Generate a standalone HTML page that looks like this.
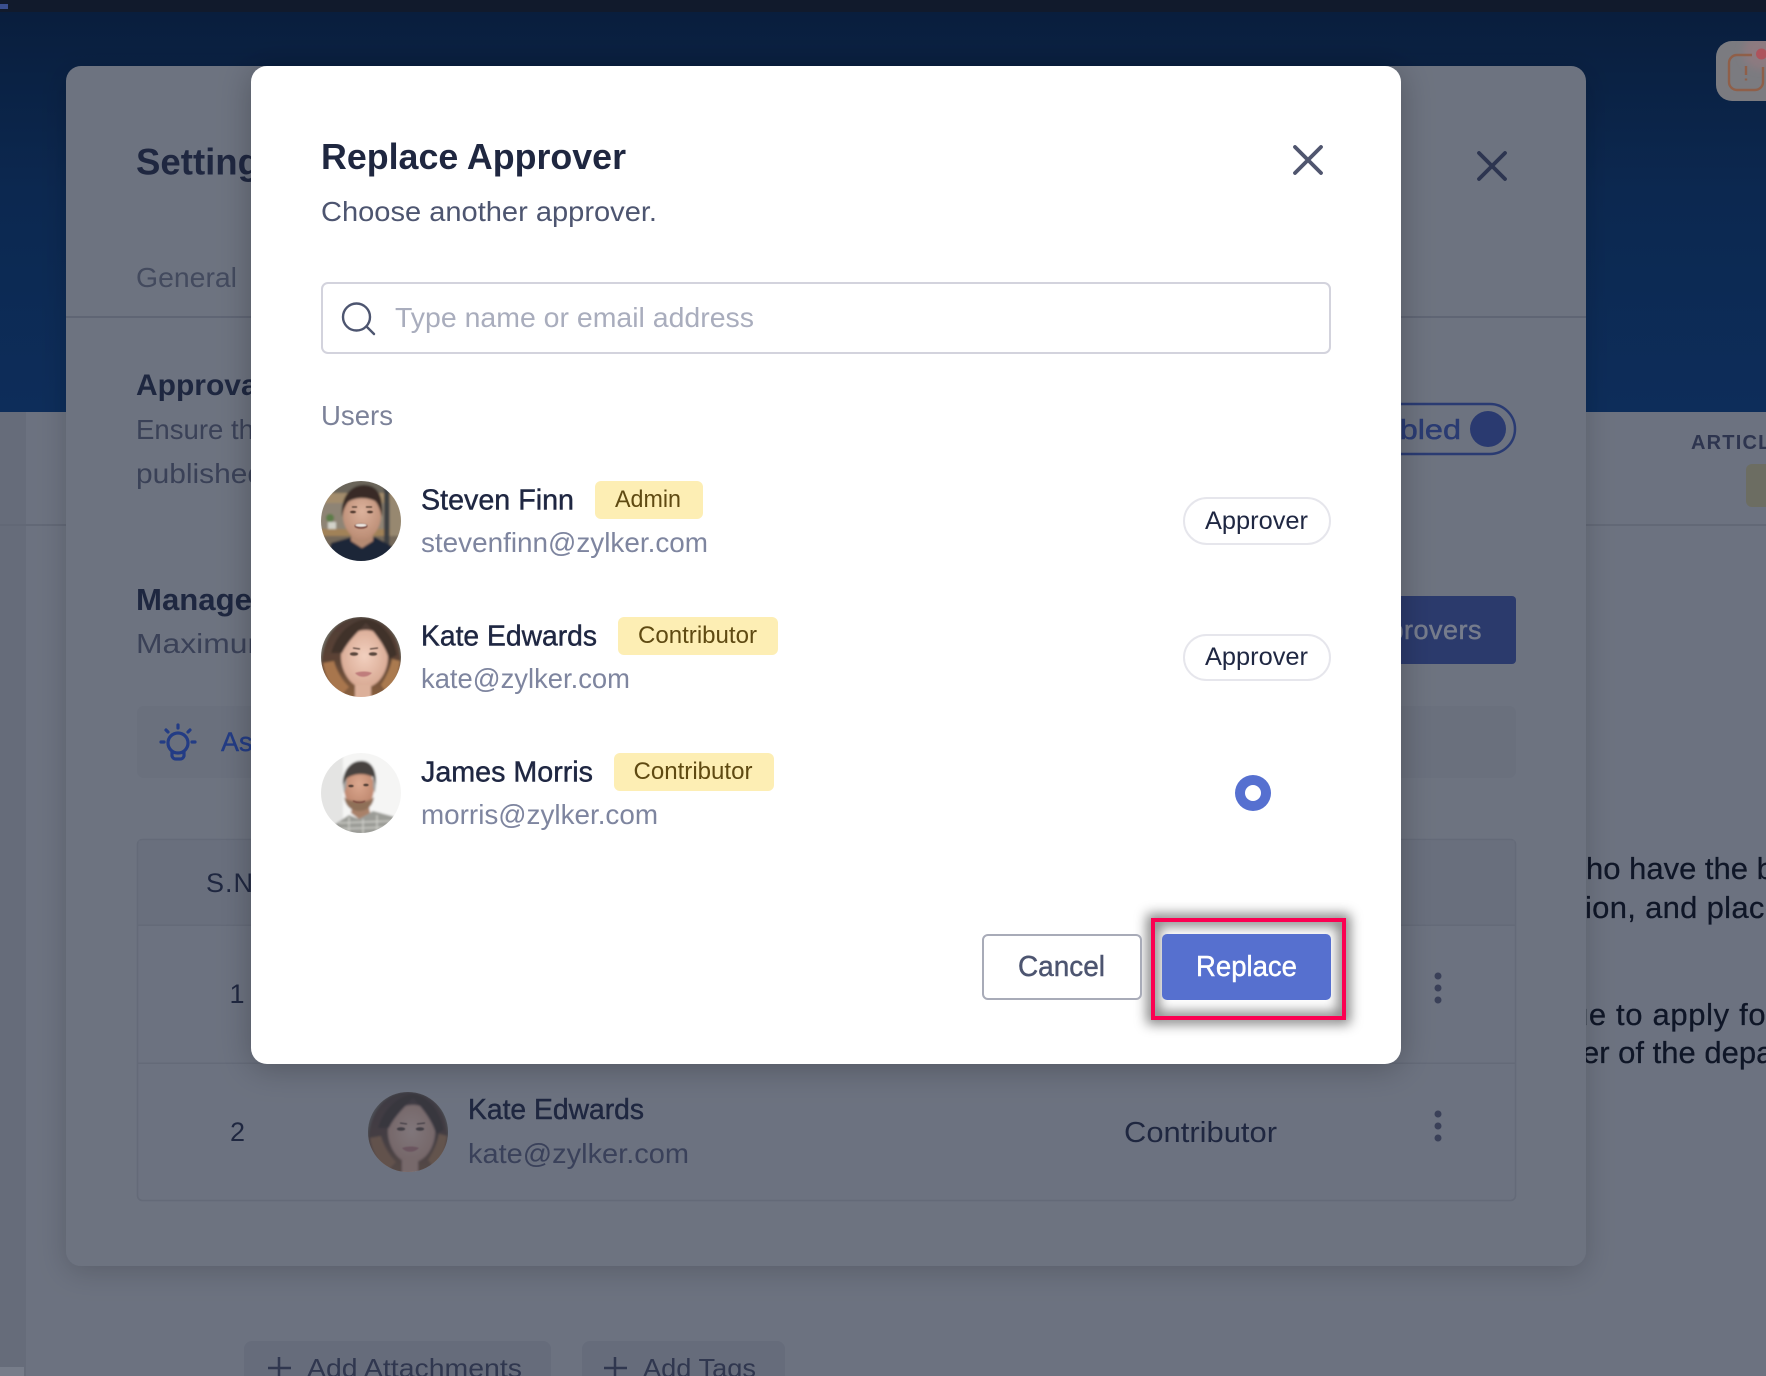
<!DOCTYPE html>
<html lang="en">
<head>
<meta charset="utf-8">
<title>Replace Approver</title>
<style>
html,body{margin:0;padding:0;width:1766px;height:1376px;overflow:hidden;background:#6c7280}
svg{display:block;position:absolute;left:0;top:0}
text{font-family:"Liberation Sans",Arial,sans-serif}
.m{stroke-width:.45px}
</style>
</head>
<body>
<svg width="1766" height="1376" viewBox="0 0 1766 1376" xmlns="http://www.w3.org/2000/svg">
<defs>
<linearGradient id="hdr" x1="0" y1="0" x2="0" y2="1"><stop offset="0" stop-color="#091e3d"/><stop offset=".45" stop-color="#0c2850"/><stop offset="1" stop-color="#0d2d5a"/></linearGradient>
<radialGradient id="skinS" cx=".5" cy=".4" r=".65"><stop offset="0" stop-color="#dcb29c"/><stop offset="1" stop-color="#b98a72"/></radialGradient>
<radialGradient id="skinK" cx=".5" cy=".45" r=".65"><stop offset="0" stop-color="#f2d0bf"/><stop offset="1" stop-color="#d3a18a"/></radialGradient>
<radialGradient id="skinJ" cx=".5" cy=".4" r=".65"><stop offset="0" stop-color="#dca88f"/><stop offset="1" stop-color="#b98269"/></radialGradient>
<linearGradient id="hairK" x1="0" y1="0" x2="0" y2="1"><stop offset="0" stop-color="#4d3c34"/><stop offset=".55" stop-color="#5d4436"/><stop offset="1" stop-color="#8d623f"/></linearGradient>
<filter id="av" x="-10%" y="-10%" width="120%" height="120%"><feGaussianBlur stdDeviation="1.100"/></filter>
<filter id="av2" x="-30%" y="-30%" width="160%" height="160%"><feGaussianBlur stdDeviation=".6"/></filter>
<filter id="sh1" x="-10%" y="-10%" width="120%" height="120%"><feDropShadow dx="0" dy="6" stdDeviation="14" flood-color="#000" flood-opacity=".17"/></filter>
<filter id="sh2" x="-10%" y="-10%" width="120%" height="120%"><feDropShadow dx="0" dy="4" stdDeviation="16" flood-color="#000" flood-opacity=".25"/></filter>
<filter id="glow" x="-30%" y="-50%" width="160%" height="200%"><feGaussianBlur stdDeviation="6"/></filter>
<filter id="gl2" x="-50%" y="-50%" width="200%" height="200%"><feGaussianBlur stdDeviation="4"/></filter>
<clipPath id="c40"><circle cx="0" cy="0" r="40"/></clipPath>
<clipPath id="notif"><rect x="1716" y="41" width="70" height="60" rx="16"/></clipPath>

<g id="steven" clip-path="url(#c40)"><g filter="url(#av)">
<rect x="-42" y="-42" width="84" height="84" fill="#8c7e6a"/>
<rect x="-42" y="-42" width="84" height="14" fill="#6a655a"/>
<rect x="-42" y="-28" width="84" height="10" fill="#a38c6c"/>
<rect x="-42" y="-18" width="84" height="26" fill="#8e8474"/>
<rect x="-42" y="8" width="84" height="7" fill="#a18258"/>
<rect x="-42" y="15" width="84" height="27" fill="#75695a"/>
<rect x="23" y="-42" width="5.500" height="84" fill="#3e3f43"/>
<rect x="29" y="-25" width="12" height="40" fill="#97886f"/>
<rect x="-33" y="1" width="8" height="7" fill="#d2d1c9"/>
<circle cx="-31" cy="-3" r="4" fill="#5c7b47"/>
<path d="M-30 22 L-9 16 L0 23 L14 16 L32 26 L32 42 L-34 42Z" fill="#1c2638"/>
<path d="M-10 10 L12 10 L12 20 L1 27 L-10 20Z" fill="#b58a72"/>
<ellipse cx="1" cy="-5" rx="19" ry="23" fill="url(#skinS)"/>
<path d="M-19 -4 C-21 -24 -10 -36 3 -36 C16 -36 23 -26 21 -4 C19 -12 17 -17 14 -20 C6 -24 -6 -24 -13 -19 C-16 -15 -18 -10 -19 -4Z" fill="#372c25"/>
</g>
<g filter="url(#av2)">
<ellipse cx="-8" cy="-9" rx="3" ry="1.300" fill="#4b352b"/>
<ellipse cx="9" cy="-9" rx="3" ry="1.300" fill="#4b352b"/>
<path d="M-9 -14 L-4 -14 M5 -14 L11 -14" stroke="#4a352b" stroke-width="1.300"/>
<ellipse cx="0" cy="5" rx="6.500" ry="2.800" fill="#7a4a40"/>
<ellipse cx="0" cy="4.200" rx="5.500" ry="1.500" fill="#eee8e2"/>
</g></g>

<g id="kate" clip-path="url(#c40)"><g filter="url(#av)">
<rect x="-42" y="-42" width="84" height="84" fill="#716d64"/>
<path d="M-40 8 C-38 -20 -24 -40 0 -40 C24 -40 40 -22 40 8 C41 22 34 34 24 42 L-24 42 C-34 34 -41 22 -40 8Z" fill="url(#hairK)"/>
<path d="M-38 6 C-36 20 -30 30 -20 38 L-12 30 C-20 22 -25 12 -27 4Z" fill="#a8764e"/>
<path d="M39 4 C38 18 33 28 26 36 L20 28 C25 20 29 12 31 2Z" fill="#aa7a50"/>
<path d="M-20 0 C-20 -18 -8 -27 5 -27 C18 -27 27 -16 27 0 C27 14 18 30 3 31 C-10 31 -20 14 -20 0Z" fill="url(#skinK)"/>
<path d="M-6 28 L10 28 L10 42 L-6 42Z" fill="#dcb09a"/>
<path d="M5 -34 C-4 -24 -13 -16 -19 -4 L-30 -4 C-24 -24 -10 -36 5 -38 C20 -36 32 -22 36 -2 L28 2 C24 -12 14 -24 5 -34Z" fill="#3f302a"/>
</g>
<g filter="url(#av2)">
<ellipse cx="-7" cy="-3" rx="4.200" ry="1.700" fill="#5a463c"/>
<ellipse cx="12" cy="-3" rx="4.200" ry="1.700" fill="#5a463c"/>
<path d="M-8 -9 L-1 -8 M9 -8 L17 -9" stroke="#5a443a" stroke-width="1.200"/>
<path d="M-6 16 C-1 14 7 14 11 16 C6 21 -2 21 -6 16Z" fill="#bf7d7b"/>
</g></g>

<g id="james" clip-path="url(#c40)"><g filter="url(#av)">
<rect x="-42" y="-42" width="84" height="84" fill="#f5f5f4"/>
<rect x="-42" y="-42" width="24" height="84" fill="#e4e4e3"/>
<path d="M-30 34 L-12 22 L-2 26 L12 18 L34 24 L34 42 L-30 42Z" fill="#9b9c97"/>
<path d="M-22 30 L30 28 M-24 36 L32 34 M-12 24 L-12 42 M2 26 L2 42 M16 22 L16 42" stroke="#cfcfc9" stroke-width="1.300"/>
<path d="M-8 8 L7 8 L9 20 L-2 26 L-10 20Z" fill="#a98169"/>
<ellipse cx="-2" cy="-5" rx="15" ry="21" fill="url(#skinJ)"/>
<path d="M-17 4 C-15 15 -8 18 -2 18 C6 18 12 13 13 4 C8 9 3 8 -2 8 C-8 8 -13 8 -17 4Z" fill="#8f7059"/>
<path d="M-18 -8 C-19 -22 -10 -32 -1 -32 C9 -33 16 -25 15 -8 L12 -16 C4 -20 -6 -20 -14 -15Z" fill="#46423f"/>
<path d="M12 -16 L15 -8 L14 0 L12 -5Z M-14 -15 L-18 -8 L-17 0 L-15 -5Z" fill="#a3a3a0"/>
</g>
<g filter="url(#av2)">
<ellipse cx="-10" cy="-7" rx="2.700" ry="1.200" fill="#4c3a33"/>
<ellipse cx="5" cy="-8" rx="2.700" ry="1.200" fill="#4c3a33"/>
<path d="M-8 8 C-4 10 1 10 4 8" stroke="#7a473e" stroke-width="1.300" fill="none"/>
</g></g>
</defs>

<!-- page background -->
<rect width="1766" height="1376" fill="#6c7280"/>
<rect x="0" y="412" width="26" height="964" fill="#666c7a"/>
<rect x="0" y="1367" width="24" height="9" fill="#777d8a"/>
<rect x="0" y="12" width="1766" height="400" fill="url(#hdr)"/>
<rect x="0" y="0" width="1766" height="12" fill="#111a2c"/>
<rect x="0" y="4" width="8" height="5" fill="#3a4f8f"/>
<rect x="0" y="524" width="1766" height="2" fill="#626876"/>

<!-- notification -->
<rect x="1716" y="41" width="70" height="60" rx="16" fill="#7b7b80"/>
<g clip-path="url(#notif)"><circle cx="1760" cy="52" r="17" fill="#8d7a80" filter="url(#gl2)"/></g>
<path d="M1752 55 H1737 a8 8 0 0 0 -8 8 V82 a8 8 0 0 0 8 8 H1755 a8 8 0 0 0 8 -8 V67" fill="none" stroke="#8f5f49" stroke-width="2.400"/>
<path d="M1746 66 V75 M1746 78.500 V80.500" fill="none" stroke="#8f5f49" stroke-width="2.400"/>
<circle cx="1761.500" cy="54" r="5.500" fill="#ad535c"/>

<!-- header text right -->
<text x="1691" y="449" font-size="20" font-weight="700" fill="#2e354f" letter-spacing="1.200">ARTICLE</text>
<rect x="1746" y="464" width="40" height="43" rx="6" fill="#6c6d62"/>

<!-- right article text -->
<g fill="#0f1627" stroke="#0f1627" stroke-width=".25" font-size="31">
<text x="1586" y="879">ho have the b</text>
<text x="1585" y="918" letter-spacing=".3">ion, and place</text>
<text x="1571" y="1025" letter-spacing=".65">ue to apply for</text>
<text x="1582" y="1063">er of the depa</text>
</g>

<!-- attach buttons -->
<rect x="244" y="1341" width="307" height="60" rx="8" fill="#666c7b"/>
<rect x="582" y="1341" width="203" height="60" rx="8" fill="#666c7b"/>
<path d="M279 1357 V1380 M268 1368 H291" stroke="#30374f" stroke-width="2.500" fill="none"/>
<path d="M615 1357 V1380 M604 1368 H627" stroke="#30374f" stroke-width="2.500" fill="none"/>
<text x="307" y="1377" font-size="26" fill="#30374f" textLength="215" lengthAdjust="spacingAndGlyphs">Add Attachments</text>
<text x="643" y="1377" font-size="26" fill="#30374f" textLength="113" lengthAdjust="spacingAndGlyphs">Add Tags</text>

<!-- settings panel -->
<rect x="66" y="66" width="1520" height="1200" rx="15" fill="#6d7380" filter="url(#sh1)"/>
<rect x="66" y="316" width="1520" height="2" fill="#5f6574"/>
<text x="136" y="174.500" font-size="37" font-weight="700" fill="#1f2740" textLength="124" lengthAdjust="spacingAndGlyphs">Setting</text>
<text x="136" y="287" font-size="28" fill="#434a5e" textLength="101" lengthAdjust="spacingAndGlyphs">General</text>
<text x="136" y="395" font-size="30" font-weight="700" fill="#1e2740" textLength="130" lengthAdjust="spacingAndGlyphs">Approval</text>
<text x="136" y="439" font-size="28" fill="#3a4157" textLength="118" lengthAdjust="spacingAndGlyphs">Ensure th</text>
<text x="136" y="483" font-size="28" fill="#3a4157" textLength="128" lengthAdjust="spacingAndGlyphs">published</text>
<text x="136" y="610" font-size="31" font-weight="700" fill="#1e2740" textLength="116" lengthAdjust="spacingAndGlyphs">Manage</text>
<text x="136" y="653" font-size="28" fill="#3a4157" textLength="138" lengthAdjust="spacingAndGlyphs">Maximum</text>

<!-- toggle -->
<rect x="1330" y="404" width="185" height="50" rx="25" fill="none" stroke="#2a3b72" stroke-width="2.500"/>
<text x="1342" y="439" font-size="28" fill="#2a3b72" stroke="#2a3b72" stroke-width=".5" textLength="119" lengthAdjust="spacingAndGlyphs">Enabled</text>
<circle cx="1488" cy="429" r="18" fill="#2a3a70"/>

<!-- approvers button -->
<rect x="1360" y="596" width="156" height="68" rx="4" fill="#2b3a6c"/>
<text x="1482" y="639" font-size="27" fill="#767c8c" stroke="#767c8c" stroke-width=".5" text-anchor="end" letter-spacing=".5">Approvers</text>

<!-- tip -->
<rect x="137" y="706" width="1379" height="72" rx="7" fill="#6a707d"/>
<g fill="none" stroke="#233c85" stroke-width="3.200" stroke-linecap="round">
<path d="M178 725 V728 M161 742 H164 M192 742 H195 M166 730 L168 732 M190 730 L188 732"/>
<circle cx="178" cy="743" r="10"/>
<path d="M172 752 V756 a4 4 0 0 0 4 3 H180 a4 4 0 0 0 4 -3 V752"/>
</g>
<text x="221" y="751" font-size="27" fill="#233c85" stroke="#233c85" class="m">Assign</text>

<!-- table -->
<rect x="137.500" y="839.500" width="1378" height="361" rx="5" fill="#6c7280" stroke="#646a78" stroke-width="1.600"/>
<path d="M138.500 840.500 H1514.500 V925 H138.500Z" fill="#696f7d"/>
<rect x="138" y="924.500" width="1377" height="1.500" fill="#646a78"/>
<rect x="138" y="1062.500" width="1377" height="1.500" fill="#646a78"/>
<text x="206" y="892" font-size="27" fill="#1f2740" letter-spacing="1">S.No</text>
<text x="237" y="1003" font-size="27" fill="#1f2740" text-anchor="middle">1</text>
<text x="237.500" y="1141" font-size="27" fill="#1f2740" text-anchor="middle">2</text>
<use href="#kate" transform="translate(408 1132)"/>
<circle cx="408" cy="1132" r="40" fill="#333a4c" opacity=".6"/>
<text x="468" y="1119" font-size="29" fill="#1f2740" stroke="#1f2740" class="m" textLength="176" lengthAdjust="spacingAndGlyphs">Kate Edwards</text>
<text x="468" y="1163" font-size="28" fill="#3a415a" textLength="221" lengthAdjust="spacingAndGlyphs">kate@zylker.com</text>
<text x="1124" y="1142" font-size="29" fill="#1f2740" textLength="153" lengthAdjust="spacingAndGlyphs">Contributor</text>
<g fill="#3a4058">
<circle cx="1438" cy="976" r="3.500"/><circle cx="1438" cy="988" r="3.500"/><circle cx="1438" cy="1000" r="3.500"/>
<circle cx="1438" cy="1114" r="3.500"/><circle cx="1438" cy="1126" r="3.500"/><circle cx="1438" cy="1138" r="3.500"/>
</g>
<path d="M1479 153 L1505 179 M1505 153 L1479 179" stroke="#2d3550" stroke-width="3.800" stroke-linecap="round" fill="none"/>

<!-- modal -->
<rect x="251" y="66" width="1150" height="998" rx="16" fill="#fff" filter="url(#sh2)"/>
<text x="321" y="169" font-size="36" font-weight="700" fill="#1f2740" textLength="305" lengthAdjust="spacingAndGlyphs">Replace Approver</text>
<text x="321" y="221" font-size="28" fill="#4d5570" textLength="336" lengthAdjust="spacingAndGlyphs">Choose another approver.</text>
<path d="M1295 147 L1321 173 M1321 147 L1295 173" stroke="#50566f" stroke-width="3.800" stroke-linecap="round" fill="none"/>

<rect x="322" y="283" width="1008" height="70" rx="6" fill="#fff" stroke="#d3d3dd" stroke-width="2"/>
<g fill="none" stroke="#4d5570" stroke-width="2.400" stroke-linecap="round">
<circle cx="356.500" cy="317" r="13.500"/><path d="M366.500 326.500 L374 334"/>
</g>
<text x="395" y="327" font-size="28" fill="#a9adbd" textLength="359" lengthAdjust="spacingAndGlyphs">Type name or email address</text>
<text x="321" y="425" font-size="28" fill="#7c8299" textLength="72" lengthAdjust="spacingAndGlyphs">Users</text>

<!-- row 1 -->
<use href="#steven" transform="translate(361 521)"/>
<text x="421" y="509.500" font-size="29" fill="#1f2742" stroke="#1f2742" class="m" textLength="153" lengthAdjust="spacingAndGlyphs">Steven Finn</text>
<rect x="595" y="481" width="108" height="38" rx="6" fill="#fdeeb4"/>
<text x="615" y="507" font-size="24" fill="#5f4a12" textLength="66" lengthAdjust="spacingAndGlyphs">Admin</text>
<text x="421" y="552" font-size="28" fill="#7e859f" textLength="287" lengthAdjust="spacingAndGlyphs">stevenfinn@zylker.com</text>
<rect x="1184" y="498" width="146" height="46" rx="23" fill="#fff" stroke="#e6e6ec" stroke-width="2"/>
<text x="1205" y="529" font-size="25" fill="#1f2742" textLength="103" lengthAdjust="spacingAndGlyphs">Approver</text>

<!-- row 2 -->
<use href="#kate" transform="translate(361 657)"/>
<text x="421" y="645.500" font-size="29" fill="#1f2742" stroke="#1f2742" class="m" textLength="176" lengthAdjust="spacingAndGlyphs">Kate Edwards</text>
<rect x="618" y="617" width="160" height="38" rx="6" fill="#fdeeb4"/>
<text x="638" y="643" font-size="24" fill="#5f4a12" textLength="119" lengthAdjust="spacingAndGlyphs">Contributor</text>
<text x="421" y="688" font-size="28" fill="#7e859f" textLength="209" lengthAdjust="spacingAndGlyphs">kate@zylker.com</text>
<rect x="1184" y="635" width="146" height="45" rx="22.500" fill="#fff" stroke="#e6e6ec" stroke-width="2"/>
<text x="1205" y="665" font-size="25" fill="#1f2742" textLength="103" lengthAdjust="spacingAndGlyphs">Approver</text>

<!-- row 3 -->
<use href="#james" transform="translate(361 793)"/>
<text x="421" y="781.500" font-size="29" fill="#1f2742" stroke="#1f2742" class="m" textLength="172" lengthAdjust="spacingAndGlyphs">James Morris</text>
<rect x="614" y="753" width="160" height="38" rx="6" fill="#fdeeb4"/>
<text x="633.500" y="779" font-size="24" fill="#5f4a12" textLength="119" lengthAdjust="spacingAndGlyphs">Contributor</text>
<text x="421" y="824" font-size="28" fill="#7e859f" textLength="237" lengthAdjust="spacingAndGlyphs">morris@zylker.com</text>
<circle cx="1253" cy="793" r="18" fill="#5670d0"/>
<circle cx="1253" cy="793" r="8" fill="#fff"/>

<!-- highlight glow -->
<rect x="1153" y="920" width="191" height="98" fill="none" stroke="#000" stroke-opacity=".5" stroke-width="12" filter="url(#glow)"/>

<!-- buttons -->
<rect x="983" y="935" width="158" height="64" rx="5" fill="#fff" stroke="#a8abb8" stroke-width="2"/>
<text x="1018" y="976" font-size="29" fill="#4d5570" stroke="#4d5570" class="m" textLength="87" lengthAdjust="spacingAndGlyphs">Cancel</text>
<rect x="1162" y="934" width="169" height="66" rx="5" fill="#5670cf"/>
<text x="1196" y="976" font-size="29" fill="#fff" stroke="#fff" class="m" textLength="101" lengthAdjust="spacingAndGlyphs">Replace</text>
<rect x="1153" y="920" width="191" height="98" fill="none" stroke="#fb0051" stroke-width="4"/>
</svg>
</body>
</html>
